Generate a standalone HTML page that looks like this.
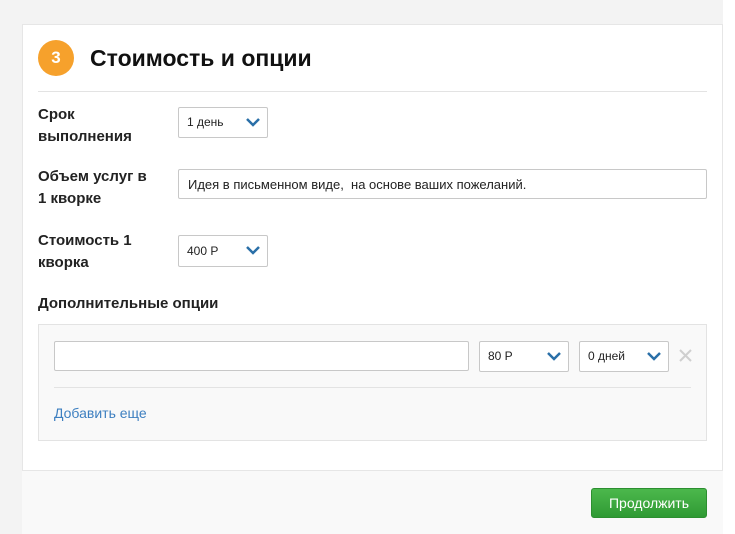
<!DOCTYPE html>
<html><head><meta charset="utf-8"><style>
*{box-sizing:border-box;margin:0;padding:0}
body{width:735px;height:534px;background:#f3f3f3;font-family:"Liberation Sans","Noto Sans CJK SC",sans-serif;color:#222;position:relative;overflow:hidden}
.abs{position:absolute}
.card{left:22px;top:24px;width:701px;height:447px;background:#fff;border:1px solid #e6e6e6}
.strip{left:723px;top:0;width:12px;height:534px;background:#fff}
.bottom{left:22px;top:471px;width:701px;height:63px;background:#f9f9f9}
.circle{left:38px;top:40px;width:36px;height:36px;border-radius:50%;background:#f6a12c;color:#fff;font-weight:bold;font-size:17px;text-align:center;line-height:36px}
.title{left:90px;top:45px;font-size:23px;font-weight:bold;color:#111}
.hr{height:1px;background:#e3e3e3}
.lbl{left:38px;font-size:15px;font-weight:bold;color:#222;line-height:22px}
.box{background:#fff;border:1px solid #c8c8c8;border-radius:2px;font-size:12px;line-height:29px;padding-left:8px;color:#222}
.chev{position:absolute;right:7px;top:9px}
</style></head><body>
<div class="abs strip"></div>
<div class="abs bottom"></div>
<div class="abs card"></div>
<div class="abs circle">3</div>
<div class="abs title">Стоимость и опции</div>
<div class="abs hr" style="left:38px;top:91px;width:669px"></div>

<div class="abs lbl" style="top:104px">Срок<br>выполнения</div>
<div class="abs box" style="left:178px;top:107px;width:90px;height:31px">1 день<svg class="chev" width="14" height="10" viewBox="0 0 14 10"><path d="M1 2l6 6 6-6" stroke="#2a6fa8" stroke-width="2.5" fill="none"/></svg></div>

<div class="abs lbl" style="top:166px">Объем услуг в<br>1 кворке</div>
<div class="abs box" style="left:178px;top:169px;width:529px;height:30px;font-size:13px;padding-left:9px">Идея в письменном виде,&nbsp; на основе ваших пожеланий.</div>

<div class="abs lbl" style="top:230px">Стоимость 1<br>кворка</div>
<div class="abs box" style="left:178px;top:235px;width:90px;height:32px;line-height:31px">400 Р<svg class="chev" width="14" height="10" viewBox="0 0 14 10"><path d="M1 2l6 6 6-6" stroke="#2a6fa8" stroke-width="2.5" fill="none"/></svg></div>

<div class="abs lbl" style="top:293px">Дополнительные опции</div>
<div class="abs" style="left:38px;top:324px;width:669px;height:117px;background:#f9f9f9;border:1px solid #e3e3e3"></div>
<div class="abs box" style="left:54px;top:341px;width:415px;height:30px"></div>
<div class="abs box" style="left:479px;top:341px;width:90px;height:31px">80 Р<svg class="chev" width="14" height="10" viewBox="0 0 14 10"><path d="M1 2l6 6 6-6" stroke="#2a6fa8" stroke-width="2.5" fill="none"/></svg></div>
<div class="abs box" style="left:579px;top:341px;width:90px;height:31px">0 дней<svg class="chev" width="14" height="10" viewBox="0 0 14 10"><path d="M1 2l6 6 6-6" stroke="#2a6fa8" stroke-width="2.5" fill="none"/></svg></div>
<svg class="abs" style="left:679px;top:349px" width="13" height="13" viewBox="0 0 13 13"><path d="M1 1l11 11M12 1L1 12" stroke="#cfcfcf" stroke-width="2"/></svg>
<div class="abs hr" style="left:54px;top:387px;width:637px"></div>
<div class="abs" style="left:54px;top:405px;font-size:14px;color:#3d7fc0">Добавить еще</div>

<div class="abs" style="left:591px;top:488px;width:116px;height:30px;border-radius:3px;background:linear-gradient(#4cb84c,#2f9a34);border:1px solid #2c8f30;color:#fff;font-size:14px;text-align:center;line-height:28px">Продолжить</div>
</body></html>
